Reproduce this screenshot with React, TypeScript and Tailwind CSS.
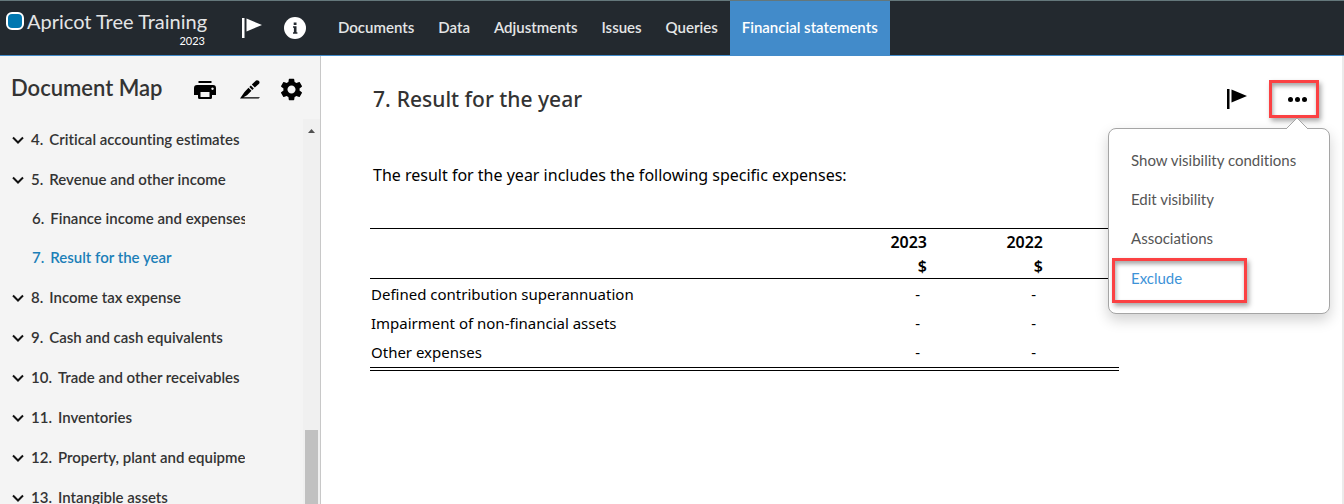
import { MdSettings } from "react-icons/md";

const tabs = ["Documents", "Data", "Adjustments", "Issues", "Queries", "Financial statements"];

const documents = [
  { no: 4, title: "Critical accounting estimates" },
  {
    no: 5,
    title: "Revenue and other income",
    children: [
      { no: 6, title: "Finance income and expenses" },
      { no: 7, title: "Result for the year", active: true },
    ],
  },
  { no: 8, title: "Income tax expense" },
  { no: 9, title: "Cash and cash equivalents" },
  { no: 10, title: "Trade and other receivables" },
  { no: 11, title: "Inventories" },
  { no: 12, title: "Property, plant and equipment" },
  { no: 13, title: "Intangible assets" },
];

const expenses = [
  "Defined contribution superannuation",
  "Impairment of non-financial assets",
  "Other expenses",
];

const menuItems = ["Show visibility conditions", "Edit visibility", "Associations"];

function FlagIcon() {
  return (
    <svg width="20" height="20" viewBox="0 0 20 20" fill="currentColor" aria-hidden="true">
      <path d="M0 0h2.5v20H0zM4.5 0.5 20 7 4.5 13.5z" />
    </svg>
  );
}

function InfoIcon() {
  return (
    <svg width="22" height="22" viewBox="0 0 22 22" aria-hidden="true">
      <circle cx="11" cy="11" r="11" fill="#fff" />
      <path d="M9.7 5.5h2.8V8H9.7zM9 9.3h3.5v6H13.4v1.4H9v-1.4h.9v-4.6H9z" fill="#23292f" />
    </svg>
  );
}

function PrintIcon() {
  return (
    <svg width="22" height="18" viewBox="0 0 22 18" fill="currentColor" aria-hidden="true">
      <path d="M4.5 0h13v2h-13z" />
      <path
        fillRule="evenodd"
        d="M3 4h16a3 3 0 0 1 3 3v7h-4v2.5a1.5 1.5 0 0 1-1.5 1.5h-11A1.5 1.5 0 0 1 4 16.5V14H0V7a3 3 0 0 1 3-3zM6.5 11v5h9v-5zM18.500 6.500a1.200 1.200 0 1 0 .01 0z"
      />
    </svg>
  );
}

function SignIcon() {
  return (
    <svg width="20" height="19" viewBox="0 0 20 19" fill="currentColor" aria-hidden="true">
      <path d="M0 18.500 4.500 12 8.500 7.800 11.500 10.700 7 15.200 3.500 17.200H20L18.500 18.500z" />
      <path d="M9.300 7 10.800 5.500 13.800 8.400 12.300 9.900z" />
      <path d="M11.800 4.500 16 0.500Q17.200-0.300 18.700 0.800 20.200 2.200 19 3.800L14.800 7.500z" />
    </svg>
  );
}

function ChevronIcon() {
  return (
    <svg width="12" height="8" viewBox="0 0 12 8" fill="none" stroke="#111" strokeWidth="2" aria-hidden="true">
      <path d="m1 1.5 5 5 5-5" />
    </svg>
  );
}

function Header() {
  return (
    <header className="flex h-14 border-t border-b border-t-[#64777b] border-b-[#428bca] bg-[#23292f] text-white">
      <div className="flex w-[326px] shrink-0 items-start">
        <div className="w-[205px] pt-[6px] pl-[6px]">
          <div className="flex items-center gap-[3px]">
            <span className="h-[18px] w-[18px] shrink-0 rounded-md border-2 border-white bg-[#0077b0]" />
            <span className="text-xl leading-7 whitespace-nowrap text-[#e4e5e6]">Apricot Tree Training</span>
          </div>
          <p className="text-right text-[11px] leading-3">2023</p>
        </div>
        <button className="mt-[17px] ml-[37px]" aria-label="Flag">
          <FlagIcon />
        </button>
        <button className="mt-4 ml-[22px]" aria-label="Information">
          <InfoIcon />
        </button>
      </div>
      <nav className="flex">
        {tabs.map((tab) => (
          <a
            key={tab}
            href="#"
            className={`flex items-center px-3 pb-[2px] text-[15px] font-semibold whitespace-nowrap ${
              tab === "Financial statements" ? "bg-[#428bca] text-white" : "text-[#e4e5e6]"
            }`}
          >
            {tab}
          </a>
        ))}
      </nav>
    </header>
  );
}

function DocumentMap() {
  return (
    <aside className="flex w-[321px] shrink-0 flex-col border-r border-[#c8c8c8] bg-[#f4f4f4] text-[#333]">
      <div className="flex h-[63px] shrink-0 items-center pl-[11px]">
        <h2 className="w-[183px] text-[22px] font-semibold">Document Map</h2>
        <div className="flex items-center gap-6 pt-1 text-black">
          <button aria-label="Print">
            <PrintIcon />
          </button>
          <button aria-label="Sign off">
            <SignIcon />
          </button>
          <button className="-ml-[6px]" aria-label="Settings">
            <MdSettings size={27} />
          </button>
        </div>
      </div>
      <div className="flex min-h-0 flex-1 justify-between">
        <ul className="w-[245px] overflow-hidden text-[15px] font-semibold whitespace-nowrap">
          {documents.map((doc) => (
            <li key={doc.no}>
              <a href="#" className="flex h-10 items-center pl-3">
                <span className="w-[19px] shrink-0 pt-[2px]">
                  <ChevronIcon />
                </span>
                <span className="mr-[6px]">{doc.no}.</span>
                <span className="shrink-0">{doc.title}</span>
              </a>
              {doc.children && (
                <ul>
                  {doc.children.map((child) => (
                    <li key={child.no}>
                      <a
                        href="#"
                        className={`flex h-[39px] items-center gap-[6px] pl-8 ${child.active ? "text-[#1c7fb8]" : ""}`}
                      >
                        <span>{child.no}.</span>
                        {child.title}
                      </a>
                    </li>
                  ))}
                </ul>
              )}
            </li>
          ))}
        </ul>
        <div className="flex w-[17px] flex-col items-center bg-[#f0f0f0] pt-[9px]">
          <svg width="7" height="5" viewBox="0 0 7 5" fill="#505050" aria-hidden="true">
            <path d="M0 5 3.5 1 7 5z" />
          </svg>
          <div className="mt-[297px] w-[13px] flex-1 bg-[#c1c1c1]" />
        </div>
      </div>
    </aside>
  );
}

function ActionsMenu() {
  return (
    <div className="absolute top-[48px] right-[-11px] w-[222px] rounded-lg border border-[#a5a5a5] bg-white pt-3 pb-[10px] font-['Lato',sans-serif] text-[15px] text-[#555] shadow-[0_6px_14px_rgba(0,0,0,0.18)]">
      <svg className="absolute top-[-12px] right-5" width="24" height="12" viewBox="0 0 24 12" aria-hidden="true">
        <path d="M1 12 12 1 23 12" fill="#fff" stroke="#a5a5a5" />
      </svg>
      {menuItems.map((item) => (
        <button key={item} className="flex h-[39px] w-full items-center px-[22px] whitespace-nowrap">
          {item}
        </button>
      ))}
      <button className="ml-[3px] flex h-[45px] w-[135px] items-center border-[3px] border-[#fb4143] px-4 pb-1 text-[#3d93d8] shadow-[2px_3px_5px_rgba(0,0,0,0.35),inset_1px_3px_4px_rgba(0,0,0,0.35)]">
        Exclude
      </button>
    </div>
  );
}

function Statement() {
  return (
    <main className="min-w-0 flex-1 border-r-2 border-[#ebebeb] bg-white pr-[23px] pl-[49px] font-['Noto_Sans',sans-serif] text-black">
      <div className="flex items-start justify-between pt-6">
        <h1 className="flex gap-[6px] pt-[3px] pl-[3px] text-[21px] leading-8 font-medium text-[#333]">
          <span>7.</span>
          <span>Result for the year</span>
        </h1>
        <div className="relative flex items-center gap-[22px]">
          <button aria-label="Flag">
            <FlagIcon />
          </button>
          <button
            className="flex h-[38px] w-[50px] items-center justify-center gap-[2px] border-[3px] border-[#fb4143] pl-[6px] shadow-[2px_3px_5px_rgba(0,0,0,0.35),inset_1px_3px_4px_rgba(0,0,0,0.35)]"
            aria-label="More actions"
          >
            <span className="h-[5px] w-[5px] rounded-full bg-black" />
            <span className="h-[5px] w-[5px] rounded-full bg-black" />
            <span className="h-[5px] w-[5px] rounded-full bg-black" />
          </button>
          <ActionsMenu />
        </div>
      </div>
      <p className="mt-[45px] pl-[3px] text-base leading-6">
        The result for the year includes the following specific expenses:
      </p>
      <table className="mt-[41px] w-full max-w-[749px] text-[15px]">
        <thead className="border-y border-black text-base leading-6">
          <tr className="h-[50px] text-right">
            <td />
            <th className="w-[116px] font-semibold">
              2023
              <br />$
            </th>
            <th className="w-[116px] font-semibold">
              2022
              <br />$
            </th>
            <td className="w-[76px]" />
          </tr>
        </thead>
        <tbody className="border-b-4 border-double border-black">
          {expenses.map((expense) => (
            <tr key={expense} className="h-[30px]">
              <td className="pl-px">{expense}</td>
              <td className="pr-[7px] text-right">-</td>
              <td className="pr-[7px] text-right">-</td>
              <td />
            </tr>
          ))}
        </tbody>
      </table>
    </main>
  );
}

export default function App() {
  return (
    <div className="flex h-screen flex-col overflow-hidden font-['Lato',sans-serif] [font-variant-ligatures:none]">
      <Header />
      <div className="flex min-h-0 flex-1">
        <DocumentMap />
        <Statement />
      </div>
    </div>
  );
}
